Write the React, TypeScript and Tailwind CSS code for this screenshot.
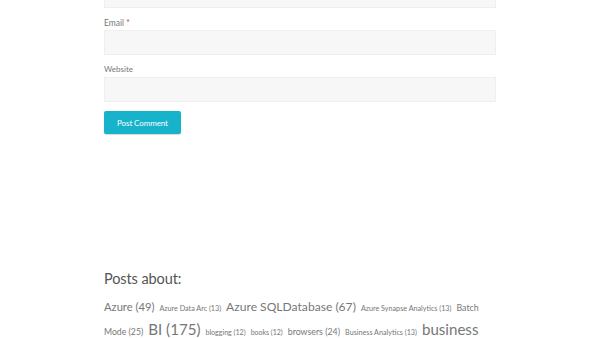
import React from "react";

const row1: { t: string; s: number }[] = [
  { t: "Azure (49)", s: 11.2 },
  { t: "Azure Data Arc (13)", s: 7.2 },
  { t: "Azure SQLDatabase (67)", s: 12.1 },
  { t: "Azure Synapse Analytics (13)", s: 7.2 },
  { t: "Batch", s: 8.8 },
];
const row2: { t: string; s: number }[] = [
  { t: "Mode (25)", s: 8.7 },
  { t: "BI (175)", s: 15.1 },
  { t: "blogging (12)", s: 7.1 },
  { t: "books (12)", s: 7 },
  { t: "browsers (24)", s: 8.8 },
  { t: "Business Analytics (13)", s: 7.2 },
  { t: "business", s: 15.1 },
];

export default function App() {
  return (
    <div className="w-[600px] h-[338px] overflow-hidden bg-white" style={{ fontFamily: "Lato, 'Open Sans', sans-serif" }}>
      <div className="mx-auto w-[392px]">
        <div className="-mt-[17px] h-[25px] bg-[#f7f7f7] border border-[#efefef]" />
        <div className="mt-[10px] text-[8.5px] leading-[11px] text-[#777]">
          Email <span className="text-[#d33]">*</span>
        </div>
        <div className="mt-[1px] h-[25px] bg-[#f7f7f7] border border-[#efefef]" />
        <div className="mt-[9px] text-[8px] leading-[11px] text-[#777]">Website</div>
        <div className="mt-[2px] h-[25px] bg-[#f7f7f7] border border-[#efefef]" />
        <button className="mt-[9px] w-[77px] h-[23px] rounded-[2px] bg-[#17b3ca] text-white text-[8px] tracking-[-0.1px] shadow-[0_1px_1px_rgba(0,0,0,0.15)]">
          Post Comment
        </button>
        <h3 className="mt-[135px] text-[14.5px] tracking-[-0.1px] leading-[20px] text-[#555]">Posts about:</h3>
        <div className="mt-[8px] text-[#777]">
          <div className="flex items-baseline gap-[5px] whitespace-nowrap h-[24px] pt-[4px]">
            {row1.map((g) => (
              <span key={g.t} style={{ fontSize: g.s }} className="leading-none">
                {g.t}
              </span>
            ))}
          </div>
          <div className="flex items-baseline gap-[5px] whitespace-nowrap h-[24px] pt-[1px]">
            {row2.map((g) => (
              <span key={g.t} style={{ fontSize: g.s }} className="leading-none">
                {g.t}
              </span>
            ))}
          </div>
        </div>
      </div>
    </div>
  );
}
